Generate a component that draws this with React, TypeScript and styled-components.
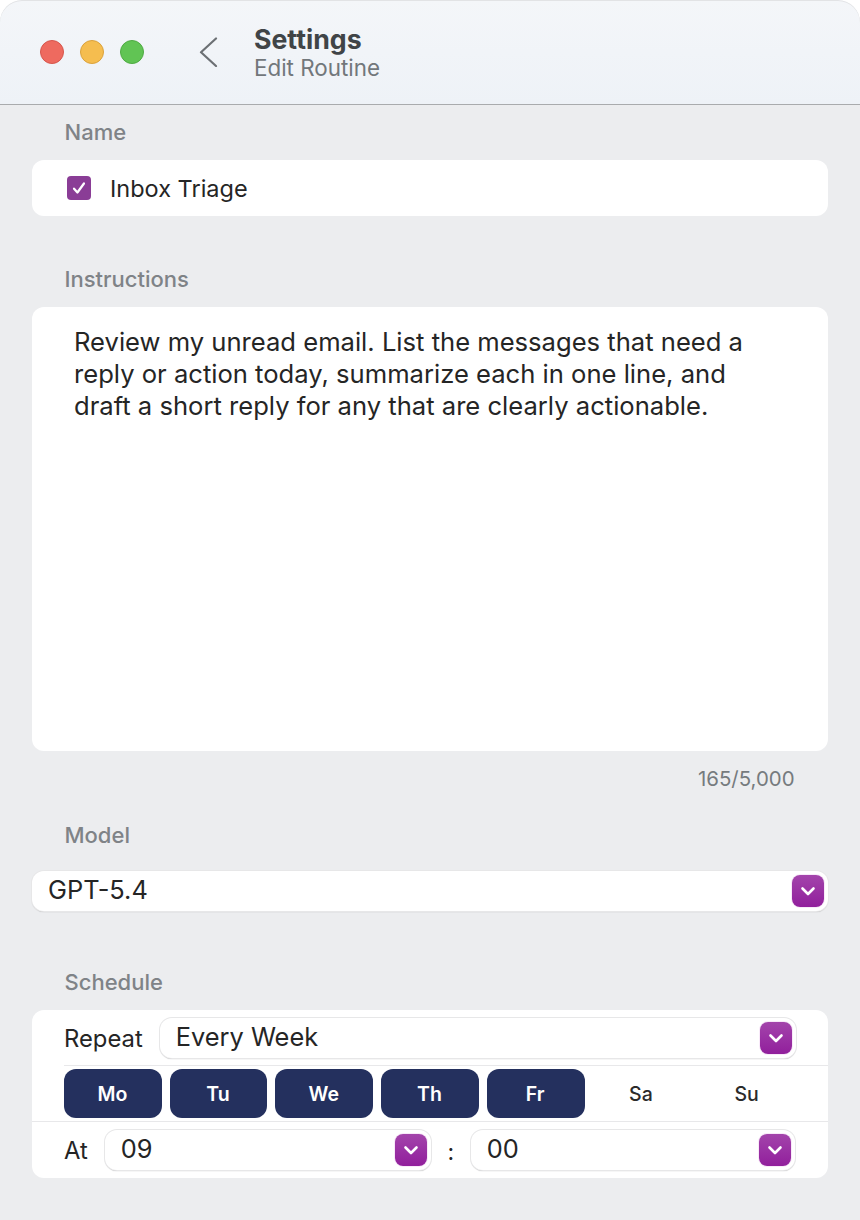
import React from "react";
import styled, { createGlobalStyle } from "styled-components";

const GlobalStyle = createGlobalStyle`
  html, body {
    margin: 0;
    padding: 0;
    background: #fff;
  }
  body {
    font-family: Inter, "Noto Sans", "Liberation Sans", sans-serif;
    -webkit-font-smoothing: antialiased;
  }
`;

const Window = styled.div`
  width: 860px;
  height: 1220px;
  box-sizing: border-box;
  background: #ecedef;
  border-radius: 22px 22px 0 0;
  overflow: hidden;
  display: flex;
  flex-direction: column;
`;

const TitleBar = styled.header`
  height: 105px;
  flex: none;
  box-sizing: border-box;
  display: flex;
  align-items: center;
  padding-left: 40px;
  background: linear-gradient(180deg, #f4f6f9 0%, #eef2f7 100%);
  border-bottom: 1px solid #a9abad;
  box-shadow: inset 0 1px 0 #e2e3e5;
  border-radius: 22px 22px 0 0;
`;

const Lights = styled.div`
  display: flex;
  gap: 16px;
`;

const Light = styled.span<{ $fill: string; $edge: string }>`
  width: 24px;
  height: 24px;
  box-sizing: border-box;
  border-radius: 50%;
  background: ${(p) => p.$fill};
  border: 1px solid ${(p) => p.$edge};
`;

const BackButton = styled.div`
  display: flex;
  margin-left: 54px;
  color: #6c7074;
`;

const Titles = styled.div`
  margin-left: 34px;
  display: flex;
  flex-direction: column;
`;

const Title = styled.div`
  font-size: 26.7px;
  line-height: 32px;
  font-weight: 700;
  color: #404447;
`;

const Subtitle = styled.div`
  font-size: 22.4px;
  line-height: 26px;
  color: #72777b;
`;

const Content = styled.main`
  padding: 15px 32px 0;
`;

const SectionLabel = styled.div<{ $top?: number; $bottom?: number }>`
  margin: ${(p) => p.$top ?? 0}px 0 ${(p) => p.$bottom ?? 16}px 32.5px;
  font-size: 22px;
  line-height: 24px;
  font-weight: 550;
  color: #7f8387;
`;

const Card = styled.section`
  background: #fff;
  border-radius: 12px;
`;

const NameCard = styled(Card)`
  height: 56px;
  display: flex;
  align-items: center;
  padding-left: 35px;
  gap: 19px;
  font-size: 23.5px;
  color: #252525;
`;

const CheckBox = styled.span`
  width: 24px;
  height: 24px;
  border-radius: 4px;
  background: #8a3d96;
  display: flex;
  align-items: center;
  justify-content: center;
`;

const InstructionsCard = styled(Card)`
  height: 444px;
  box-sizing: border-box;
  padding: 19px 42px;
  font-size: 25.6px;
  line-height: 32px;
  color: #252525;
`;

const Counter = styled.div`
  margin: 16px 33.5px 0 0;
  text-align: right;
  font-size: 20.4px;
  line-height: 24px;
  color: #767b7e;
`;

const SelectBox = styled.div`
  height: 40px;
  flex: 1;
  min-width: 0;
  box-sizing: border-box;
  display: flex;
  align-items: center;
  justify-content: space-between;
  padding: 0 4px 0 16px;
  background: #fff;
  border-radius: 12px;
  box-shadow: 0 0 0 1px #e7e7e8, 0 1px 1px 0 #a2a2a4;
  font-size: 25.4px;
  color: #252525;
`;

const SelectValue = styled.span`
  margin-top: -3px;
`;

const SelectArrow = styled.span`
  width: 32px;
  height: 32px;
  flex: none;
  border-radius: 8px;
  display: flex;
  align-items: center;
  justify-content: center;
  background: linear-gradient(180deg, #a344ab 0%, #911f9c 100%);
  box-shadow: 0 0 0 1px #f8e9f9;
`;

const ScheduleCard = styled(Card)`
  height: 168px;
  display: flex;
  flex-direction: column;
`;

const RepeatRow = styled.div`
  height: 56px;
  box-sizing: border-box;
  display: flex;
  gap: 17px;
  padding: 8px 32px 7px 0;
  margin-left: 32px;
  border-bottom: 1px solid #e8e8ea;
`;

const RowLabel = styled.span`
  font-size: 23.8px;
  line-height: 42px;
  color: #252525;
`;

const DaysRow = styled.div`
  height: 56px;
  box-sizing: border-box;
  display: grid;
  grid-template-columns: repeat(7, 1fr);
  gap: 8px;
  padding: 3px 32px;
  border-bottom: 1px solid #e8e8ea;
`;

const Day = styled.div<{ $on?: boolean }>`
  height: 49px;
  border-radius: 12px;
  display: flex;
  align-items: center;
  justify-content: center;
  padding-right: 1px;
  font-size: 19.5px;
  font-weight: ${(p) => (p.$on ? 600 : 500)};
  color: ${(p) => (p.$on ? "#fff" : "#2b2b2b")};
  background: ${(p) => (p.$on ? "#24305e" : "transparent")};
`;

const TimeRow = styled.div`
  flex: 1;
  display: flex;
  padding: 8px 33px 0 32px;
  gap: 17px;
`;

const TimeFields = styled.div`
  flex: 1;
  height: 40px;
  display: grid;
  grid-template-columns: 326px 40px 1fr;
`;

const Colon = styled.span`
  font-size: 23px;
  line-height: 45px;
  text-align: center;
  color: #252525;
`;

const Chevron = () => (
  <svg width="16" height="16" viewBox="0 0 16 16" fill="none">
    <path d="M2.5 5.5 8 11l5.5-5.5" stroke="#fff" strokeWidth="2.6" strokeLinecap="round" strokeLinejoin="round" />
  </svg>
);

const Select = ({ value }: { value: string }) => (
  <SelectBox>
    <SelectValue>{value}</SelectValue>
    <SelectArrow>
      <Chevron />
    </SelectArrow>
  </SelectBox>
);

const days = [
  { name: "Mo", on: true },
  { name: "Tu", on: true },
  { name: "We", on: true },
  { name: "Th", on: true },
  { name: "Fr", on: true },
  { name: "Sa", on: false },
  { name: "Su", on: false },
];

export default function App() {
  return (
    <>
      <GlobalStyle />
      <Window>
        <TitleBar>
          <Lights>
            <Light $fill="#ee6a5f" $edge="#d6564c" />
            <Light $fill="#f5bd4f" $edge="#dba23c" />
            <Light $fill="#61c454" $edge="#4fab43" />
          </Lights>
          <BackButton>
            <svg width="22" height="30" viewBox="0 0 22 30" fill="none">
              <path d="M18 1.5 3 15.2 18 29" stroke="currentColor" strokeWidth="2.2" strokeLinecap="round" strokeLinejoin="round" />
            </svg>
          </BackButton>
          <Titles>
            <Title>Settings</Title>
            <Subtitle>Edit Routine</Subtitle>
          </Titles>
        </TitleBar>
        <Content>
          <SectionLabel>Name</SectionLabel>
          <NameCard>
            <CheckBox>
              <svg width="18" height="18" viewBox="0 0 16 16" fill="none">
                <path d="M3.6 8.6 6.6 12 12.4 4" stroke="#fff" strokeWidth="2" strokeLinecap="round" strokeLinejoin="round" />
              </svg>
            </CheckBox>
            Inbox Triage
          </NameCard>

          <SectionLabel $top={51}>Instructions</SectionLabel>
          <InstructionsCard>
            Review my unread email. List the messages that need a
            <br />
            reply or action today, summarize each in one line, and
            <br />
            draft a short reply for any that are clearly actionable.
          </InstructionsCard>
          <Counter>165/5,000</Counter>

          <SectionLabel $top={32} $bottom={24}>Model</SectionLabel>
          <Select value="GPT-5.4" />

          <SectionLabel $top={59}>Schedule</SectionLabel>
          <ScheduleCard>
            <RepeatRow>
              <RowLabel>Repeat</RowLabel>
              <Select value="Every Week" />
            </RepeatRow>
            <DaysRow>
              {days.map((d) => (
                <Day key={d.name} $on={d.on}>
                  {d.name}
                </Day>
              ))}
            </DaysRow>
            <TimeRow>
              <RowLabel>At</RowLabel>
              <TimeFields>
                <Select value="09" />
                <Colon>:</Colon>
                <Select value="00" />
              </TimeFields>
            </TimeRow>
          </ScheduleCard>
        </Content>
      </Window>
    </>
  );
}
